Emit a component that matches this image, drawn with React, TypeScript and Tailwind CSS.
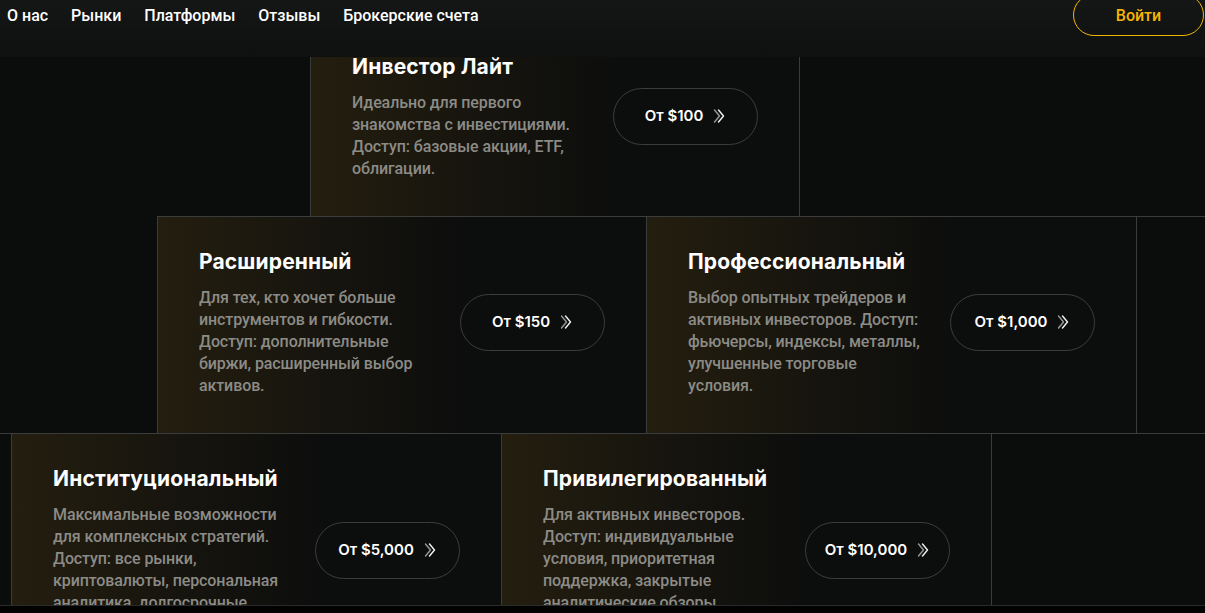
import React from "react";

const Chevrons = () => (
  <svg width="14" height="16" viewBox="0 0 14 16" fill="none" className="shrink-0">
    <path d="M2.5 2 L7.5 8 L2.5 14" stroke="#9a9a9a" strokeWidth="1.4" strokeLinecap="round" strokeLinejoin="round" />
    <path d="M6.5 2 L11.5 8 L6.5 14" stroke="#f2f2f2" strokeWidth="1.4" strokeLinecap="round" strokeLinejoin="round" />
  </svg>
);

type Card = { title: string; lines: string[]; price: string };

const CardCell = ({ c, first }: { c: Card; first?: boolean }) => (
  <div
    className={
      "w-[490px] shrink-0 border-r border-[#3b3c3c] bg-[linear-gradient(90deg,#241e0f_0%,#17150e_32%,#0c0d0d_64%)] flex items-center justify-between pl-[41px] pr-[41px] pt-[31px] pb-[36px] " +
      (first ? "border-l" : "")
    }
  >
    <div className="self-start">
      <div className="text-[21px] leading-[28px] font-bold text-white font-['Inter',sans-serif] tracking-[0.15px]">{c.title}</div>
      <p className="mt-[11px] text-[16px] leading-[22px] font-medium text-[#8c8b86] font-['Roboto',sans-serif] tracking-[-0.1px]">
        {c.lines.map((l, i) => (
          <React.Fragment key={i}>
            {l}
            {i < c.lines.length - 1 && <br />}
          </React.Fragment>
        ))}
      </p>
    </div>
    <button className="mb-[1px] w-[145px] h-[57px] shrink-0 rounded-full border border-[#3b3c3c] flex items-center justify-center gap-[9px] text-white text-[15px] font-semibold font-['Inter',sans-serif]">
      <span>{c.price}</span>
      <Chevrons />
    </button>
  </div>
);

const Empty = ({ first }: { first?: boolean }) => (
  <div className={"w-[490px] shrink-0 border-r border-[#3b3c3c] " + (first ? "border-l" : "")} />
);

const cards: Card[] = [
  {
    title: "Инвестор Лайт",
    lines: ["Идеально для первого", "знакомства с инвестициями.", "Доступ: базовые акции, ETF,", "облигации."],
    price: "От $100",
  },
  {
    title: "Расширенный",
    lines: ["Для тех, кто хочет больше", "инструментов и гибкости.", "Доступ: дополнительные", "биржи, расширенный выбор", "активов."],
    price: "От $150",
  },
  {
    title: "Профессиональный",
    lines: ["Выбор опытных трейдеров и", "активных инвесторов. Доступ:", "фьючерсы, индексы, металлы,", "улучшенные торговые", "условия."],
    price: "От $1,000",
  },
  {
    title: "Институциональный",
    lines: ["Максимальные возможности", "для комплексных стратегий.", "Доступ: все рынки,", "криптовалюты, персональная", "аналитика, долгосрочные", "инвестиции."],
    price: "От $5,000",
  },
  {
    title: "Привилегированный",
    lines: ["Для активных инвесторов.", "Доступ: индивидуальные", "условия, приоритетная", "поддержка, закрытые", "аналитические обзоры."],
    price: "От $10,000",
  },
];

export default function App() {
  const nav = ["О нас", "Рынки", "Платформы", "Отзывы", "Брокерские счета"];
  return (
    <div className="relative w-[1205px] h-[613px] overflow-hidden bg-[#0b0d0d] flex flex-col">
      <header className="absolute top-0 left-0 right-0 h-[57px] z-10 bg-[linear-gradient(180deg,#151616_0%,#111212_60%,#0f1010_100%)]">
        <div className="flex items-center justify-between h-[42px] -mt-[6px] pl-[7px] pr-[1px]">
          <nav className="flex items-center gap-[23px] mt-[2px] text-white text-[16px] font-medium font-['Roboto',sans-serif]">
            {nav.map((n) => (
              <a key={n}>{n}</a>
            ))}
          </nav>
          <button className="w-[131px] h-[42px] rounded-full border border-[#f2b705] text-[#f7b500] text-[16px] font-medium font-['Roboto',sans-serif] pt-[2px]">
            Войти
          </button>
        </div>
      </header>

      <main className="flex-1 overflow-hidden pt-[22px] border-b border-[#2a2b2b]">
        <div className="flex w-max ml-[310px]">
          <CardCell c={cards[0]} first />
          <Empty />
        </div>
        <div className="flex w-max ml-[157px] border-t border-[#3b3c3c]">
          <CardCell c={cards[1]} first />
          <CardCell c={cards[2]} />
          <Empty />
        </div>
        <div className="flex w-max -ml-[478px] border-t border-[#3b3c3c]">
          <Empty first />
          <CardCell c={cards[3]} />
          <CardCell c={cards[4]} />
          <Empty />
        </div>
      </main>
      <div className="h-[7px] bg-[#020202] shrink-0" />
    </div>
  );
}
